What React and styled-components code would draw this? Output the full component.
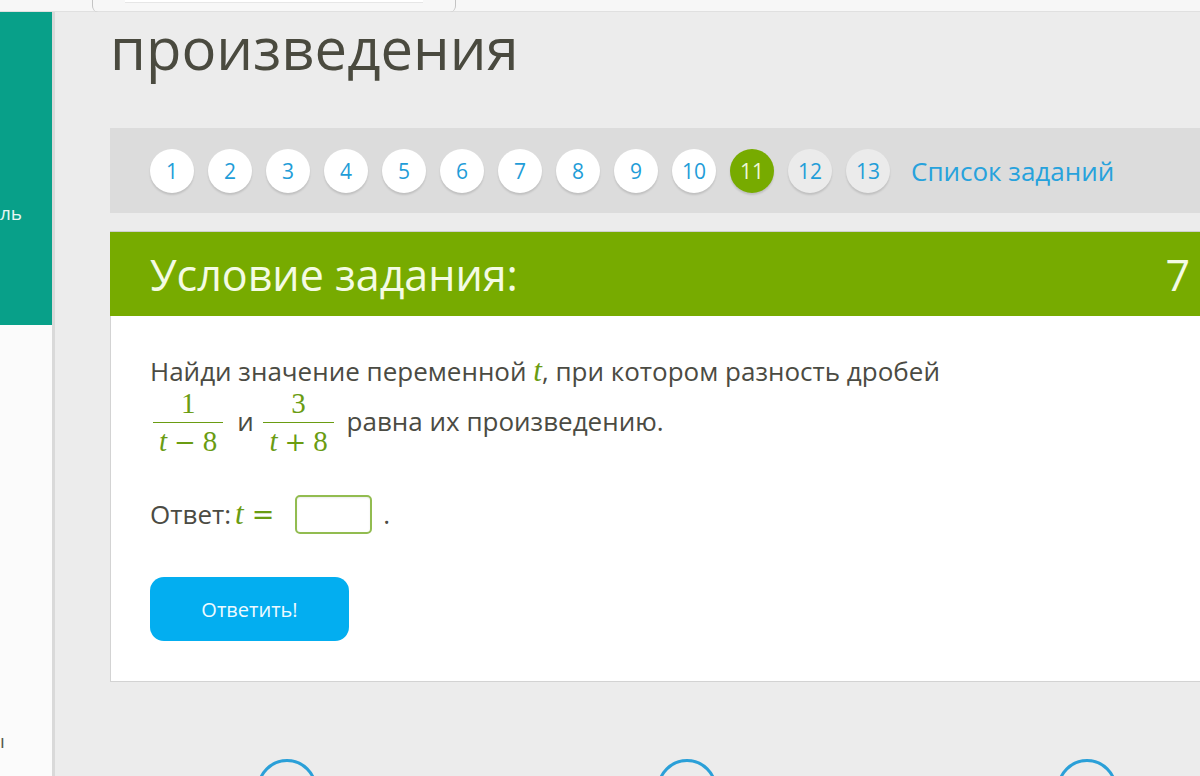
import React from 'react';
import styled, { createGlobalStyle } from 'styled-components';

const GlobalStyle = createGlobalStyle`
  html, body {
    margin: 0;
    padding: 0;
    background: #ececec;
    font-family: "Open Sans", "Noto Sans", sans-serif;
    overflow: hidden;
  }
`;

const Frame = styled.div`
  width: 1200px;
  height: 776px;
  display: flex;
  flex-direction: column;
  overflow: hidden;
`;

const TopStrip = styled.div`
  height: 12px;
  flex: none;
  background: #f7f7f7;
  border-bottom: 1px solid #e0e0e0;
  box-sizing: border-box;
  padding-left: 92px;
  display: flex;
`;

const TopTab = styled.div`
  width: 364px;
  height: 12px;
  box-sizing: border-box;
  border-left: 1px solid #c4c4c4;
  border-right: 1px solid #c4c4c4;
  border-radius: 0 0 6px 6px;
  display: flex;
  justify-content: center;
`;

const TopField = styled.div`
  width: 298px;
  height: 2px;
  background: #ffffff;
  border-bottom: 1px solid #e6e6e6;
`;

const Body = styled.div`
  flex: 1;
  display: flex;
  min-height: 0;
`;

const Sidebar = styled.div`
  width: 52px;
  flex: none;
  display: flex;
  flex-direction: column;
  border-right: 3px solid #d9d9d9;
`;

const SideTop = styled.div`
  height: 313px;
  background: #08a089;
  color: #e9f7f4;
  font-size: 19px;
  padding-top: 189px;
  box-sizing: border-box;
  line-height: 24px;
`;

const SideRest = styled.div`
  flex: 1;
  background: #fbfbfb;
  color: #55554c;
  font-size: 19px;
  padding-top: 404px;
  box-sizing: border-box;
  line-height: 24px;
`;

const Main = styled.div`
  flex: 1;
  padding-left: 55px;
  display: flex;
  flex-direction: column;
  min-width: 0;
`;

const Title = styled.h1`
  margin: 8px 0 52px;
  font-weight: 400;
  font-size: 58px;
  line-height: 56px;
  color: #4a4a3f;
`;

const Pager = styled.div`
  height: 85px;
  background: #dcdcdc;
  display: flex;
  align-items: center;
  gap: 14px;
  padding-left: 40px;
  flex: none;
`;

const dotBg = { normal: '#ffffff', active: '#77ab00', muted: '#ebebeb' };

const Dot = styled.div`
  width: 44px;
  height: 44px;
  border-radius: 50%;
  background: ${p => dotBg[p.$kind]};
  color: ${p => (p.$kind === 'active' ? '#eef7d6' : '#1f9dd8')};
  box-shadow: 0 2px 2px rgba(0, 0, 0, 0.13);
  display: flex;
  align-items: center;
  justify-content: center;
  font-size: 21px;
  flex: none;
`;

const ListLink = styled.span`
  margin-left: 7px;
  font-size: 26px;
  color: #27a2dc;
  white-space: nowrap;
`;

const Card = styled.div`
  margin-top: 18px;
  flex: none;
`;

const CardHead = styled.div`
  height: 85px;
  background: #77ab00;
  border-top: 1px solid #cfcfcf;
  box-sizing: border-box;
  display: flex;
  align-items: center;
  justify-content: space-between;
  padding: 0 10px 0 40px;
  color: #f4fbe4;
  font-size: 43px;
`;

const CardBody = styled.div`
  background: #ffffff;
  border: 1px solid #d3d3d3;
  border-top: none;
  border-right: none;
  padding: 38px 40px 40px 39px;
  color: #4b4b43;
  font-size: 26px;
`;

const Question = styled.p`
  margin: 0;
  line-height: 34px;
`;

const mathFont = `"Liberation Serif", "DejaVu Serif", serif`;
const green = '#6a9c12';

const MathVar = styled.span`
  font-family: ${mathFont};
  font-style: italic;
  font-size: 31px;
  color: ${green};
  margin-left: ${p => p.$gap || 0}px;
`;

const MathSign = styled.span`
  font-family: "DejaVu Serif", serif;
  font-size: 27px;
  color: ${green};
  margin-left: 8px;
`;

/* inline-flex baseline = numerator baseline; bar sits ~9px above the text baseline */
const Frac = styled.span`
  display: inline-flex;
  flex-direction: column;
  align-items: stretch;
  vertical-align: 18px;
  margin: 2px ${p => p.$trail}px 0 ${p => p.$lead}px;
  font-family: ${mathFont};
  font-size: 29px;
  color: ${green};
  line-height: 26px;
`;

const FracPart = styled.span`
  display: block;
  text-align: center;
  padding: 0 6px;
  border-top: ${p => (p.$under ? `1.5px solid ${green}` : 'none')};
  padding-top: ${p => (p.$under ? '5px' : '0')};
  padding-bottom: ${p => (p.$under ? '0' : '6px')};
`;

const Italic = styled.i`
  font-style: italic;
`;

const Op = styled.span`
  font-family: "DejaVu Serif", serif;
  font-size: 26px;
  margin: 0 7px;
`;

const AnswerRow = styled.div`
  margin-top: 39px;
  display: flex;
  align-items: center;
  height: 40px;
`;

const AnswerBox = styled.div`
  width: 77px;
  height: 39px;
  box-sizing: border-box;
  border: 2px solid #92bc50;
  border-radius: 5px;
  box-shadow: inset 0 1px 2px rgba(0, 0, 0, 0.08);
  margin: 0 11px 0 21px;
  background: #fff;
`;

const SubmitButton = styled.button`
  margin-top: 43px;
  width: 199px;
  height: 64px;
  border: none;
  border-radius: 14px;
  background: #03aef0;
  color: #eefaff;
  font-family: "Open Sans", "Noto Sans", sans-serif;
  font-size: 20px;
  display: block;
`;

const CircleRow = styled.div`
  margin-top: 77px;
  padding-left: 147px;
  display: flex;
  gap: 340px;
`;

const NavCircle = styled.div`
  width: 60px;
  height: 60px;
  box-sizing: border-box;
  border-radius: 50%;
  border: 3px solid #2ba0d8;
  flex: none;
`;

const pages = [1, 2, 3, 4, 5, 6, 7, 8, 9, 10, 11, 12, 13];

export default function App() {
  return (
    <Frame>
      <GlobalStyle />
      <TopStrip>
        <TopTab>
          <TopField />
        </TopTab>
      </TopStrip>
      <Body>
        <Sidebar>
          <SideTop>ль</SideTop>
          <SideRest>ı</SideRest>
        </Sidebar>
        <Main>
          <Title>произведения</Title>
          <Pager>
            {pages.map(n => (
              <Dot key={n} $kind={n === 11 ? 'active' : n > 11 ? 'muted' : 'normal'}>
                {n}
              </Dot>
            ))}
            <ListLink>Список заданий</ListLink>
          </Pager>
          <Card>
            <CardHead>
              <span>Условие задания:</span>
              <span>7</span>
            </CardHead>
            <CardBody>
              <Question>
                Найди значение переменной <MathVar>t</MathVar>, при котором разность дробей
                <br />
                <Frac $lead={3} $trail={7}>
                  <FracPart>1</FracPart>
                  <FracPart $under>
                    <Italic>t</Italic>
                    <Op>−</Op>8
                  </FracPart>
                </Frac>{' '}
                и{' '}
                <Frac $lead={3} $trail={6}>
                  <FracPart>3</FracPart>
                  <FracPart $under>
                    <Italic>t</Italic>
                    <Op>+</Op>8
                  </FracPart>
                </Frac>{' '}
                равна их произведению.
              </Question>
              <AnswerRow>
                Ответ:<MathVar $gap={4}>t</MathVar>
                <MathSign>=</MathSign>
                <AnswerBox />
                .
              </AnswerRow>
              <SubmitButton>Ответить!</SubmitButton>
            </CardBody>
          </Card>
          <CircleRow>
            <NavCircle />
            <NavCircle />
            <NavCircle />
          </CircleRow>
        </Main>
      </Body>
    </Frame>
  );
}
